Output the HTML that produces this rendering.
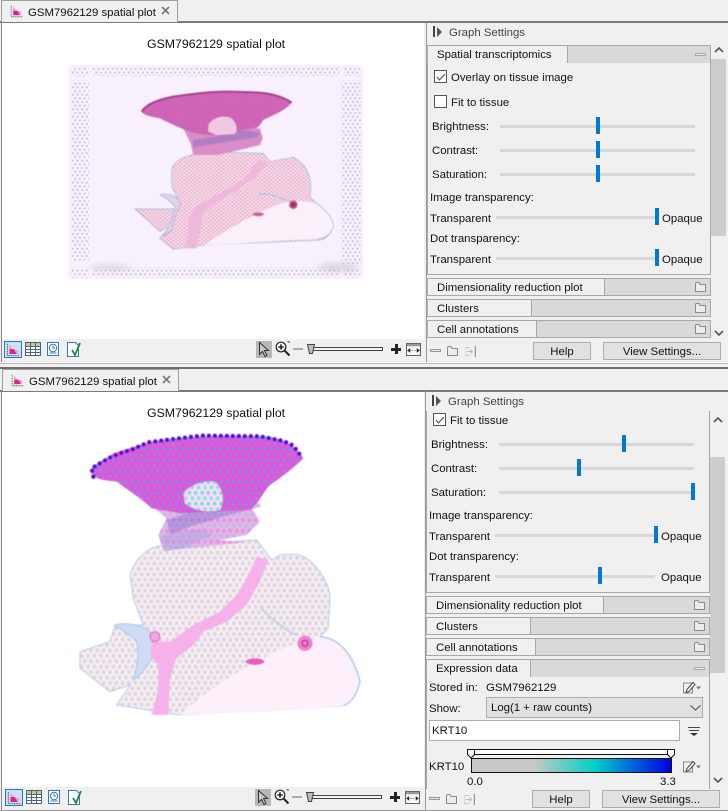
<!DOCTYPE html>
<html><head><meta charset="utf-8"><style>
html,body{margin:0;padding:0}
body{width:728px;height:811px;overflow:hidden;background:#f0f0f0;position:relative;font-family:"Liberation Sans",Arial,sans-serif;font-size:11.4px;color:#111}
.a{position:absolute;box-sizing:border-box}
.t{position:absolute;line-height:14px;height:14px;white-space:nowrap;margin-top:1px}
.track{position:absolute;height:3px;background:#d8d8d8}
.th{position:absolute;width:4px;height:17px;background:#0078d7}
.hd{position:absolute;background:#d9d9d9;border:1px solid #a8a8a8;border-left:1px solid #b0b0b0;box-sizing:border-box}
.tb{position:absolute;left:0;top:0;bottom:0;background:#f0f0f0;border-right:1px solid #a8a8a8}
.btn{position:absolute;height:18px;background:#e1e1e1;border:1px solid #adadad;box-sizing:border-box;text-align:center;line-height:18px}
.cb{position:absolute;width:13px;height:13px;background:#fff;border:1px solid #555;box-sizing:border-box}
svg{position:absolute;overflow:visible}
</style></head><body>
<svg width="0" height="0" style="left:0;top:0">
<defs>
<pattern id="bd" width="14" height="22" patternUnits="userSpaceOnUse"><circle cx="3.500" cy="5" r="3.400" fill="#cfc9df"/><circle cx="10.500" cy="16" r="3.400" fill="#cfc9df"/></pattern>
<pattern id="pk" width="13" height="11" patternUnits="userSpaceOnUse"><rect width="13" height="11" fill="#f8e2ef"/><circle cx="3" cy="3" r="2.500" fill="#dd85ac"/><circle cx="9.500" cy="8.500" r="2.500" fill="#dd85ac"/></pattern>
<pattern id="pm" width="13" height="11" patternUnits="userSpaceOnUse"><rect width="13" height="11" fill="#d56cbb"/><circle cx="3" cy="3" r="2.800" fill="#c255a8"/><circle cx="9.500" cy="8.500" r="2.800" fill="#c255a8"/></pattern>
<pattern id="gd" width="19" height="32.600" patternUnits="userSpaceOnUse"><rect width="19" height="32.600" fill="#f6eef4"/><circle cx="4.700" cy="8" r="6" fill="#dbd5da"/><circle cx="14.200" cy="24.300" r="6" fill="#dbd5da"/></pattern>
<pattern id="mg" width="19" height="32.600" patternUnits="userSpaceOnUse"><rect width="19" height="32.600" fill="#ee4cd8"/><circle cx="4.700" cy="8" r="6.500" fill="#7c8ce2"/><circle cx="14.200" cy="24.300" r="6.500" fill="#a47ae0"/></pattern>
<pattern id="mx" width="19" height="32.600" patternUnits="userSpaceOnUse"><rect width="19" height="32.600" fill="#f3aee8"/><circle cx="4.700" cy="8" r="6" fill="#9ec8e4"/><circle cx="14.200" cy="24.300" r="6" fill="#c8a0e0"/></pattern>
<pattern id="cy" width="19" height="32.600" patternUnits="userSpaceOnUse"><rect width="19" height="32.600" fill="#f6e0f4"/><circle cx="4.700" cy="8" r="6" fill="#78d8e2"/><circle cx="14.200" cy="24.300" r="6" fill="#90dce6"/></pattern>
<filter id="b1" x="-20%" y="-50%" width="140%" height="200%"><feGaussianBlur stdDeviation="7"/></filter>
<filter id="b2" x="-5%" y="-5%" width="110%" height="110%"><feGaussianBlur stdDeviation="1.500"/></filter>
<symbol id="plot" viewBox="0 0 16 16"><path d="M1.500 1v13.500H15" fill="none" stroke="#222" stroke-width="1" stroke-dasharray="1 1"/><path d="M4 1.500l3 5 7 2-1 4H4z" fill="#ee9ac8"/><path d="M4 7h5l3 5.500H4z" fill="#e0208c"/></symbol>
<symbol id="table" viewBox="0 0 16 14"><rect x=".5" y=".5" width="15" height="13" fill="#fff" stroke="#4f5f85"/><rect x="1" y="1" width="14" height="3" fill="#b6d08c"/><path d="M1 4.500h14M1 7.500h14M1 10.500h14M5.500 1v12M10.500 1v12" stroke="#4f5f85"/></symbol>
<symbol id="clock" viewBox="0 0 12 14"><rect x=".5" y=".5" width="11" height="13" fill="#fff" stroke="#3a7ab0"/><circle cx="6" cy="6" r="3.700" fill="none" stroke="#3a7ab0"/><path d="M6 3.500V6h2M2.500 11h7" fill="none" stroke="#3a7ab0"/></symbol>
<symbol id="check" viewBox="0 0 15 15"><path d="M.5.500h8l3 3v11H.5z" fill="#fff" stroke="#3a7ab0"/><path d="M5 8l3 5 5-12" fill="none" stroke="#1e8a3c" stroke-width="1.800"/></symbol>
<symbol id="cur" viewBox="0 0 16 17"><rect width="16" height="17" fill="#b8b8b8"/><path d="M3.500 1.500v12l3-3 2.500 5 2-1-2.500-5h4z" fill="#c8c8c8" stroke="#333"/></symbol>
<symbol id="zoom" viewBox="0 0 16 16"><circle cx="6" cy="6" r="4.800" fill="#fff" stroke="#222" stroke-width="1.200"/><path d="M6 3.300v5.400M3.300 6h5.400" stroke="#222" stroke-width="1.500"/><path d="M9.500 9.500l5 5" stroke="#222" stroke-width="2"/><path d="M12 0h2v2" fill="none" stroke="#555"/></symbol>
<symbol id="fit" viewBox="0 0 16 14"><rect x=".5" y=".5" width="15" height="13" fill="#f8f8f8" stroke="#555"/><rect x="1" y="1" width="14" height="2.500" fill="#999"/><path d="M2 8h2M2 8l2-1.500v3zM14 8h-2M14 8l-2-1.500v3zM6 8h1M9 8h1" stroke="#222" fill="#222"/></symbol>
<symbol id="folder" viewBox="0 0 11 10"><path d="M.5 1.500V9.500h10V2.500H5L4 .5H1z" fill="#ececec" stroke="#8a8a8a"/></symbol>
<symbol id="pen" viewBox="0 0 18 12"><rect x=".5" y="1.500" width="9" height="10" fill="#f0f0f0" stroke="#8a8a8a"/><path d="M3 11l1-3 6-7 2 2-6 7z" fill="#fff" stroke="#444"/><path d="M13 5h5l-2.500 3z" fill="#777"/></symbol>
<symbol id="tabs" viewBox="0 0 11 11"><path d="M10.500 0v11" stroke="#999" stroke-width="1.500"/><path d="M0 1.500h5M0 9.500h5M0 1.500v8" fill="none" stroke="#c8c8c8"/><path d="M2 5.500h5M5.500 3.500l2 2-2 2" fill="none" stroke="#bbb"/></symbol>
</defs></svg>

<!-- TOP window -->
<div class="a" style="left:0;top:21px;width:728px;height:2px;background:#7a7a7a"></div>
<div class="a" style="left:1px;top:0;width:177px;height:22px;background:#f0f0f0;border:1px solid #a0a0a0;border-bottom:0"></div>
<svg style="left:10px;top:5px" width="13" height="13"><use href="#plot" width="13" height="13"/></svg>
<div class="t" style="left:28px;top:5px">GSM7962129 spatial plot</div>
<svg style="left:161px;top:6px" width="9" height="9"><path d="M1 1l7 7M8 1L1 8" stroke="#777" stroke-width="1.600"/></svg>
<div class="a" style="left:1px;top:22px;width:424px;height:341px;border-left:1px solid #8a8a8a"></div>
<div class="a" style="left:2px;top:23px;width:422px;height:316px;background:#fff"></div>
<div class="t" style="left:147px;top:36px;font-size:12.3px">GSM7962129 spatial plot</div>

<svg style="left:0;top:0" width="425" height="340">
<g transform="translate(60,60) scale(.3333)">
<rect x="25" y="15" width="885" height="642" fill="#f9f0fd" filter="url(#b2)"/>
<path d="M35 18h50v30H35zM98 18h740v30H98zM852 18h48v30h-48zM35 62h52v545H35zM845 62h60v550h-60zM35 625h50v28H35zM98 622h740v30H98zM852 625h48v28h-48z" fill="url(#bd)"/>
<ellipse cx="150" cy="622" rx="60" ry="12" fill="#b9b2b8" opacity=".3" filter="url(#b1)"/>
<ellipse cx="835" cy="622" rx="60" ry="14" fill="#b9b2b8" opacity=".4" filter="url(#b1)"/>
<g filter="url(#b2)">
<path d="M335 330C345 290 400 278 470 276L610 280L630 305L700 292C730 305 755 340 752 385L750 412L770 430C800 450 820 480 820 500C812 525 795 538 780 540L430 555L340 568L298 535L340 490L300 515L225 447L345 447L360 430L335 380Z" fill="url(#pk)" stroke="#8cbadf" stroke-width="2"/>
<path d="M430 555C490 520 560 470 640 440C680 420 730 420 770 430C800 450 820 480 820 500C810 530 790 540 700 540C600 545 500 555 430 555Z" fill="#fbf0fa"/>
<path d="M770 430C800 450 820 480 820 500C812 522 800 532 780 536" fill="none" stroke="#88bce0" stroke-width="2"/>
<path d="M300 405C320 398 350 405 362 430L345 470L335 510L310 530L335 480L345 440L325 420Z" fill="#e6d0e8" stroke="#86b2dc" stroke-width="2"/>
<path d="M595 300L625 305L590 350L540 385L480 420L430 460L420 510L410 565L378 565L385 510L385 470L420 430L490 395L550 360Z" fill="#efb8da"/>
<path d="M592 405C620 395 650 410 690 425" fill="none" stroke="#9ac4e4" stroke-width="3"/>
<path d="M370 205L600 205L608 235L600 255L530 272L470 285L400 285L392 250Z" fill="#d98cc8"/>
<path d="M400 240L450 232L550 210L600 218L590 232L470 250L400 262Z" fill="#9476c0" opacity=".6"/>
<path d="M245 155C260 130 300 118 340 110C400 102 450 95 500 95C560 97 640 90 695 128C680 150 640 165 610 180C600 195 595 205 580 205C560 205 500 225 450 225C400 225 340 195 300 175C270 170 250 165 245 155Z" fill="url(#pm)"/>
<path d="M245 155C260 130 300 118 340 110C400 102 450 95 500 95C560 97 640 90 695 128" fill="none" stroke="#a33f90" stroke-width="6"/>
<path d="M445 195C455 175 490 162 515 175C530 190 535 210 525 222L470 225L445 215Z" fill="#f0c8e2"/>
<circle cx="700" cy="434" r="13" fill="#c04880"/><circle cx="700" cy="434" r="6" fill="#a02060"/>
<ellipse cx="595" cy="463" rx="17" ry="6" fill="#cc609c"/>
</g></g></svg>

<!-- top left toolbar -->
<div class="a" style="left:4px;top:341px;width:18px;height:17px;background:#cde0f2;border:1px solid #1f7ac8"></div>
<svg style="left:6px;top:343px" width="14" height="14"><use href="#plot" width="14" height="14"/></svg>
<svg style="left:25px;top:342px" width="16" height="14"><use href="#table" width="16" height="14"/></svg>
<svg style="left:47px;top:342px" width="12" height="14"><use href="#clock" width="12" height="14"/></svg>
<svg style="left:67px;top:342px" width="15" height="15"><use href="#check" width="15" height="15"/></svg>
<svg style="left:256px;top:341px" width="16" height="17"><use href="#cur" width="16" height="17"/></svg>
<svg style="left:275px;top:341px" width="16" height="16"><use href="#zoom" width="16" height="16"/></svg>
<div class="a" style="left:293px;top:348px;width:10px;height:2px;background:#aaa"></div>
<div class="a" style="left:310px;top:347px;width:73px;height:4px;background:#f4f4f4;border:1px solid #444"></div>
<svg style="left:307px;top:344px" width="8" height="10"><path d="M.5.500h7l-2 9h-3z" fill="#bbb" stroke="#444"/></svg>
<div class="a" style="left:391px;top:348px;width:10px;height:2.500px;background:#222"></div>
<div class="a" style="left:395px;top:344px;width:2.500px;height:10px;background:#222"></div>
<svg style="left:406px;top:343px" width="15" height="13"><use href="#fit" width="15" height="13"/></svg>

<!-- top right panel -->
<div class="a" style="left:426px;top:22px;width:2px;height:341px;border-left:1px solid #999"></div>
<div class="a" style="left:433px;top:26px;width:2px;height:11px;background:#444"></div>
<svg style="left:437px;top:27px" width="6" height="10"><path d="M0 0l5 5-5 5z" fill="#555"/></svg>
<div class="t" style="left:449px;top:25px;color:#444">Graph Settings</div>
<div class="a" style="left:427px;top:45px;width:284px;height:230px;border:1px solid #a8a8a8;border-right:1px solid #a8a8a8"></div>
<div class="hd" style="left:427px;top:45px;width:284px;height:18px;border-bottom:0"><div class="tb" style="width:139px"></div></div>
<div class="t" style="left:437px;top:47px">Spatial transcriptomics</div>
<div class="a" style="left:695px;top:53px;width:11px;height:3px;background:#e8e8e8;border:1px solid #aaa"></div>
<svg style="left:714px;top:47px" width="10" height="6"><path d="M1 5l4-4 4 4" fill="none" stroke="#555" stroke-width="1.600"/></svg>
<div class="a" style="left:711px;top:59px;width:15px;height:177px;background:#cdcdcd"></div>
<svg style="left:714px;top:330px" width="10" height="6"><path d="M1 1l4 4 4-4" fill="none" stroke="#555" stroke-width="1.600"/></svg>

<div class="cb" style="left:434px;top:70px"></div>
<svg style="left:436px;top:73px" width="10" height="8"><path d="M1 4l2.500 3L9 1" fill="none" stroke="#444"/></svg>
<div class="t" style="left:451px;top:70px">Overlay on tissue image</div>
<div class="cb" style="left:434px;top:95px"></div>
<div class="t" style="left:451px;top:95px">Fit to tissue</div>

<div class="t" style="left:432px;top:119px">Brightness:</div><div class="track" style="left:500px;top:125px;width:195px"></div><div class="th" style="left:596px;top:117px"></div>
<div class="t" style="left:432px;top:143px">Contrast:</div><div class="track" style="left:500px;top:149px;width:195px"></div><div class="th" style="left:596px;top:141px"></div>
<div class="t" style="left:432px;top:167px">Saturation:</div><div class="track" style="left:500px;top:173px;width:195px"></div><div class="th" style="left:596px;top:165px"></div>
<div class="t" style="left:430px;top:190px">Image transparency:</div>
<div class="t" style="left:430px;top:211px">Transparent</div><div class="track" style="left:496px;top:216px;width:160px"></div><div class="th" style="left:655px;top:208px"></div><div class="t" style="left:662px;top:211px">Opaque</div>
<div class="t" style="left:430px;top:231px">Dot transparency:</div>
<div class="t" style="left:430px;top:252px">Transparent</div><div class="track" style="left:496px;top:257px;width:160px"></div><div class="th" style="left:655px;top:249px"></div><div class="t" style="left:662px;top:252px">Opaque</div>

<div class="hd" style="left:427px;top:278px;width:284px;height:18px"><div class="tb" style="width:176px"></div></div>
<div class="t" style="left:437px;top:280px">Dimensionality reduction plot</div>
<svg style="left:695px;top:282px" width="11" height="10"><use href="#folder" width="11" height="10"/></svg>
<div class="hd" style="left:427px;top:299px;width:284px;height:18px"><div class="tb" style="width:103px"></div></div>
<div class="t" style="left:437px;top:301px">Clusters</div>
<svg style="left:695px;top:303px" width="11" height="10"><use href="#folder" width="11" height="10"/></svg>
<div class="hd" style="left:427px;top:320px;width:284px;height:18px"><div class="tb" style="width:108px"></div></div>
<div class="t" style="left:437px;top:322px">Cell annotations</div>
<svg style="left:695px;top:324px" width="11" height="10"><use href="#folder" width="11" height="10"/></svg>

<div class="a" style="left:430px;top:349px;width:11px;height:3px;background:#e8e8e8;border:1px solid #999"></div>
<svg style="left:447px;top:346px" width="11" height="10"><use href="#folder" width="11" height="10"/></svg>
<svg style="left:465px;top:346px" width="11" height="11"><use href="#tabs" width="11" height="11"/></svg>
<div class="btn" style="left:533px;top:342px;width:58px">Help</div>
<div class="btn" style="left:603px;top:342px;width:118px">View Settings...</div>

<!-- divider -->
<div class="a" style="left:0;top:362px;width:728px;height:1px;background:#fdfdfd"></div>
<div class="a" style="left:0;top:363px;width:728px;height:1px;background:#bbb"></div>
<div class="a" style="left:0;top:367px;width:728px;height:2px;background:#6e6e6e"></div>

<!-- BOTTOM window -->
<div class="a" style="left:0;top:390px;width:728px;height:2px;background:#7a7a7a"></div>
<div class="a" style="left:2px;top:369px;width:177px;height:22px;background:#f0f0f0;border:1px solid #a0a0a0;border-bottom:0"></div>
<svg style="left:11px;top:374px" width="13" height="13"><use href="#plot" width="13" height="13"/></svg>
<div class="t" style="left:29px;top:374px">GSM7962129 spatial plot</div>
<svg style="left:162px;top:375px" width="9" height="9"><path d="M1 1l7 7M8 1L1 8" stroke="#777" stroke-width="1.600"/></svg>
<div class="a" style="left:1px;top:391px;width:424px;height:419px;border-left:1px solid #8a8a8a"></div>
<div class="a" style="left:2px;top:392px;width:422px;height:395px;background:#fff"></div>
<div class="t" style="left:147px;top:405px;font-size:12.3px">GSM7962129 spatial plot</div>

<svg style="left:0;top:0" width="425" height="787">
<g transform="translate(80,425) scale(.3333)">
<g filter="url(#b2)">
<path d="M150 450C170 390 210 365 250 360L530 345L575 405L600 390C640 385 660 388 680 400C720 430 750 480 750 520L745 610L720 635C780 640 820 690 840 770C830 810 815 835 780 845L300 870L110 840L150 780L90 800L0 730L0 680L90 650L105 600L190 600L160 520Z" fill="url(#gd)" stroke="#b4cce8" stroke-width="3"/>
<path d="M300 870C400 780 520 710 620 665L720 635C780 640 820 690 840 770C830 810 815 835 780 845C620 860 450 865 300 870Z" fill="#fdf0fb"/>
<path d="M720 635C780 640 820 690 840 770C830 810 815 835 790 842" fill="none" stroke="#9cc6ec" stroke-width="4"/>
<path d="M105 600C130 590 170 600 200 610C230 640 235 680 210 710C190 740 170 760 160 765C170 730 180 690 170 650C150 625 125 620 105 600Z" fill="#cfdcf4" stroke="#a8c4ec" stroke-width="3"/>
<path d="M530 395L565 405L540 470L500 540L440 590L370 620L340 660L290 700L270 760L265 870L215 870L235 790L235 720L210 690L215 650L270 650L340 600L420 560L470 510L500 460Z" fill="#f6b0ea"/>
<path d="M540 545C570 580 610 610 650 630" fill="none" stroke="#c8d0ec" stroke-width="6"/>
<path d="M205 235L510 240L540 290L500 330L420 345L500 352L250 378L235 330L260 280Z" fill="url(#mx)"/>
<path d="M260 285L330 262L430 245L530 228L545 245L430 275L330 305L270 330Z" fill="#7868d0" opacity=".4"/>
<path d="M240 335L270 325L370 310L400 330L300 372L255 378Z" fill="#b4a0e0" opacity=".5"/>
<path d="M30 135C50 110 90 95 100 85C150 70 200 50 250 45C320 35 400 30 560 35C610 40 650 65 670 100C640 130 600 160 570 180C550 200 540 230 510 255L300 265C280 260 240 255 215 250C190 225 150 200 110 170C70 165 40 165 30 135Z" fill="url(#mg)"/>
<path d="M310 205C330 180 370 165 405 170C430 190 435 230 420 255C380 265 340 255 315 235Z" fill="url(#cy)"/>
<path d="M40 155L35 130L85 100L120 85L160 72L205 52L250 46L330 36L370 32L540 34L610 48L640 62L668 100" fill="none" stroke="#4a10d8" stroke-width="13" stroke-dasharray="0 18" stroke-linecap="round"/>
<circle cx="675" cy="655" r="23" fill="#ee80d2"/><circle cx="675" cy="655" r="9" fill="none" stroke="#c01098" stroke-width="4"/>
<ellipse cx="525" cy="710" rx="28" ry="10" fill="#e460bc"/>
<circle cx="225" cy="635" r="15" fill="#f0a8e0" stroke="#e050b8" stroke-width="3"/>
</g></g></svg>

<!-- bottom left toolbar -->
<div class="a" style="left:5px;top:789px;width:18px;height:17px;background:#cde0f2;border:1px solid #1f7ac8"></div>
<svg style="left:7px;top:791px" width="14" height="14"><use href="#plot" width="14" height="14"/></svg>
<svg style="left:26px;top:790px" width="16" height="14"><use href="#table" width="16" height="14"/></svg>
<svg style="left:48px;top:790px" width="12" height="14"><use href="#clock" width="12" height="14"/></svg>
<svg style="left:68px;top:790px" width="15" height="15"><use href="#check" width="15" height="15"/></svg>
<svg style="left:255px;top:789px" width="16" height="17"><use href="#cur" width="16" height="17"/></svg>
<svg style="left:274px;top:789px" width="16" height="16"><use href="#zoom" width="16" height="16"/></svg>
<div class="a" style="left:292px;top:796px;width:10px;height:2px;background:#aaa"></div>
<div class="a" style="left:309px;top:795px;width:73px;height:4px;background:#f4f4f4;border:1px solid #444"></div>
<svg style="left:306px;top:792px" width="8" height="10"><path d="M.5.500h7l-2 9h-3z" fill="#bbb" stroke="#444"/></svg>
<div class="a" style="left:390px;top:796px;width:10px;height:2.500px;background:#222"></div>
<div class="a" style="left:394px;top:792px;width:2.500px;height:10px;background:#222"></div>
<svg style="left:405px;top:791px" width="15" height="13"><use href="#fit" width="15" height="13"/></svg>

<!-- bottom right panel -->
<div class="a" style="left:425px;top:391px;width:2px;height:419px;border-left:1px solid #999"></div>
<div class="a" style="left:432px;top:395px;width:2px;height:11px;background:#444"></div>
<svg style="left:436px;top:396px" width="6" height="10"><path d="M0 0l5 5-5 5z" fill="#555"/></svg>
<div class="t" style="left:448px;top:394px;color:#444">Graph Settings</div>
<div class="a" style="left:426px;top:411px;width:284px;height:182px;border:1px solid #a8a8a8;border-top:0"></div>
<svg style="left:713px;top:417px" width="10" height="6"><path d="M1 5l4-4 4 4" fill="none" stroke="#555" stroke-width="1.600"/></svg>
<div class="a" style="left:710px;top:457px;width:15px;height:216px;background:#cdcdcd"></div>
<svg style="left:713px;top:777px" width="10" height="6"><path d="M1 1l4 4 4-4" fill="none" stroke="#555" stroke-width="1.600"/></svg>

<div class="cb" style="left:433px;top:413px"></div>
<svg style="left:435px;top:416px" width="10" height="8"><path d="M1 4l2.500 3L9 1" fill="none" stroke="#444"/></svg>
<div class="t" style="left:450px;top:413px">Fit to tissue</div>
<div class="t" style="left:431px;top:437px">Brightness:</div><div class="track" style="left:499px;top:443px;width:195px"></div><div class="th" style="left:622px;top:435px"></div>
<div class="t" style="left:431px;top:461px">Contrast:</div><div class="track" style="left:499px;top:467px;width:195px"></div><div class="th" style="left:577px;top:459px"></div>
<div class="t" style="left:431px;top:485px">Saturation:</div><div class="track" style="left:499px;top:491px;width:195px"></div><div class="th" style="left:691px;top:483px"></div>
<div class="t" style="left:429px;top:508px">Image transparency:</div>
<div class="t" style="left:429px;top:529px">Transparent</div><div class="track" style="left:495px;top:534px;width:160px"></div><div class="th" style="left:654px;top:526px"></div><div class="t" style="left:661px;top:529px">Opaque</div>
<div class="t" style="left:429px;top:549px">Dot transparency:</div>
<div class="t" style="left:429px;top:570px">Transparent</div><div class="track" style="left:495px;top:575px;width:160px"></div><div class="th" style="left:598px;top:567px"></div><div class="t" style="left:661px;top:570px">Opaque</div>

<div class="hd" style="left:426px;top:596px;width:284px;height:18px"><div class="tb" style="width:176px"></div></div>
<div class="t" style="left:436px;top:598px">Dimensionality reduction plot</div>
<svg style="left:694px;top:600px" width="11" height="10"><use href="#folder" width="11" height="10"/></svg>
<div class="hd" style="left:426px;top:617px;width:284px;height:18px"><div class="tb" style="width:103px"></div></div>
<div class="t" style="left:436px;top:619px">Clusters</div>
<svg style="left:694px;top:621px" width="11" height="10"><use href="#folder" width="11" height="10"/></svg>
<div class="hd" style="left:426px;top:638px;width:284px;height:18px"><div class="tb" style="width:108px"></div></div>
<div class="t" style="left:436px;top:640px">Cell annotations</div>
<svg style="left:694px;top:642px" width="11" height="10"><use href="#folder" width="11" height="10"/></svg>
<div class="a" style="left:426px;top:659px;width:284px;height:130px;border:1px solid #a8a8a8;border-bottom:0"></div>
<div class="hd" style="left:426px;top:659px;width:284px;height:18px;border-bottom:0"><div class="tb" style="width:103px"></div></div>
<div class="t" style="left:436px;top:661px">Expression data</div>
<div class="a" style="left:694px;top:667px;width:11px;height:3px;background:#e8e8e8;border:1px solid #aaa"></div>

<div class="t" style="left:429px;top:680px">Stored in:</div>
<div class="t" style="left:486px;top:680px">GSM7962129</div>
<svg style="left:683px;top:681px" width="18" height="13"><use href="#pen" width="18" height="13"/></svg>
<div class="t" style="left:429px;top:701px">Show:</div>
<div class="a" style="left:486px;top:697px;width:217px;height:21px;background:#e1e1e1;border:1px solid #adadad;line-height:21px;padding-left:4px">Log(1 + raw counts)</div>
<svg style="left:690px;top:705px" width="11" height="6"><path d="M.5.500l5 4.500 5-4.500" fill="none" stroke="#444"/></svg>
<div class="a" style="left:429px;top:720px;width:251px;height:21px;background:#fff;border:1px solid #adadad;line-height:21px;padding-left:2px">KRT10</div>
<svg style="left:688px;top:727px" width="12" height="9"><path d="M0 .500h12M1 3.500h10" stroke="#444"/><path d="M2 6h8L6 9z" fill="#333"/></svg>
<div class="a" style="left:473px;top:749px;width:197px;height:6px;background:#fff;border:1px solid #111"></div>
<svg style="left:467px;top:749px" width="9" height="10"><path d="M.5.500h7v5l-3.500 3.500-3.500-3.500z" fill="#fff" stroke="#111"/></svg>
<svg style="left:667px;top:749px" width="9" height="10"><path d="M.5.500h7v5l-3.500 3.500-3.500-3.500z" fill="#fff" stroke="#111"/></svg>
<div class="t" style="left:429px;top:759px">KRT10</div>
<div class="a" style="left:471px;top:758px;width:201px;height:15px;border:1px solid #111;background:linear-gradient(to right,#c8c8c8 0,#c8c8c8 31%,#00d0c8 62%,#0068d8 80%,#0000e0 100%)"></div>
<svg style="left:683px;top:760px" width="18" height="13"><use href="#pen" width="18" height="13"/></svg>
<div class="t" style="left:467px;top:774px">0.0</div>
<div class="t" style="left:660px;top:774px">3.3</div>

<div class="a" style="left:429px;top:797px;width:11px;height:3px;background:#e8e8e8;border:1px solid #999"></div>
<svg style="left:446px;top:794px" width="11" height="10"><use href="#folder" width="11" height="10"/></svg>
<svg style="left:464px;top:794px" width="11" height="11"><use href="#tabs" width="11" height="11"/></svg>
<div class="btn" style="left:532px;top:790px;width:58px">Help</div>
<div class="btn" style="left:602px;top:790px;width:118px">View Settings...</div>
<div class="a" style="left:0;top:810px;width:728px;height:1px;background:#999"></div>
</body></html>
